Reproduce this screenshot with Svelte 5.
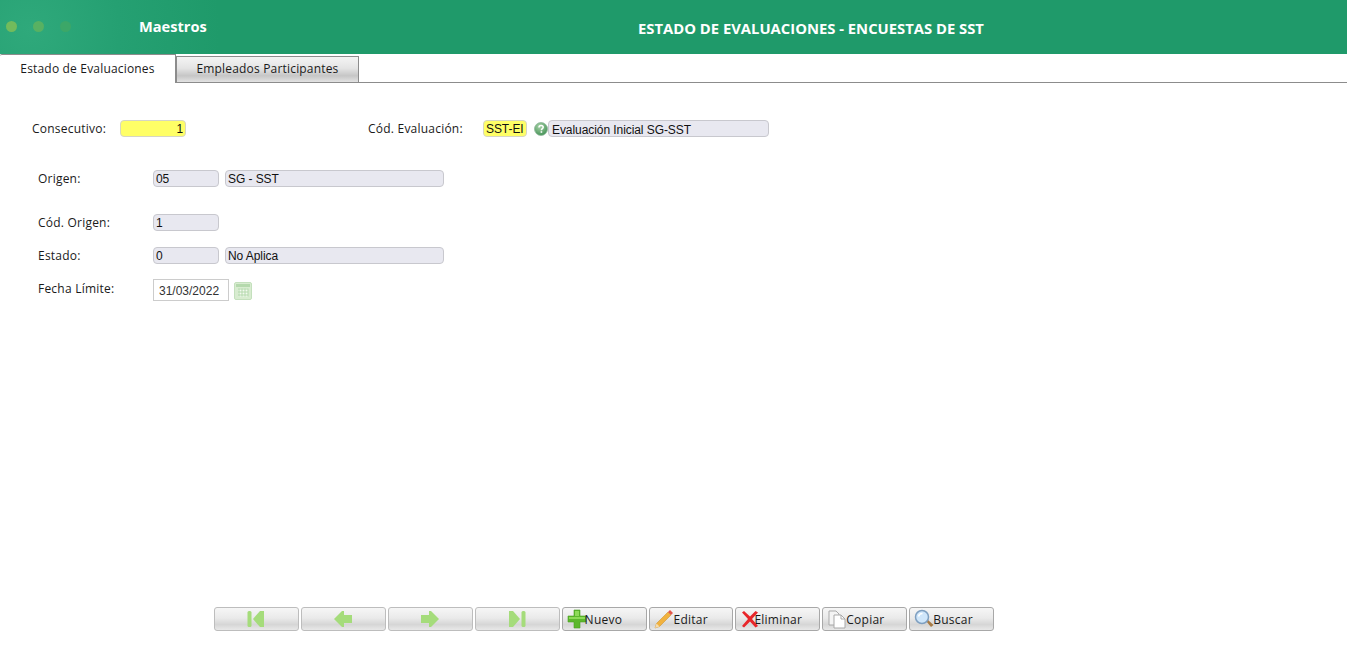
<script>
  const tabs = ["Estado de Evaluaciones", "Empleados Participantes"];
  const navButtons = ["first", "prev", "next", "last"];
  const actions = ["Nuevo", "Editar", "Eliminar", "Copiar", "Buscar"];
  const fields = [
    { label: "Origen:", code: "05", name: "SG - SST", gap: 27 },
    { label: "Cód. Origen:", code: "1", gap: 16 },
    { label: "Estado:", code: "0", name: "No Aplica", gap: 13 }
  ];
</script>

<div class="page">
  <header class="topbar">
    <div class="dots">
      <span class="dot d1"></span>
      <span class="dot d2"></span>
      <span class="dot d3"></span>
    </div>
    <div class="section">Maestros</div>
    <h1>ESTADO DE EVALUACIONES - ENCUESTAS DE SST</h1>
  </header>

  <nav class="tabs">
    {#each tabs as tab, i}
      <div class="tab" class:active={i === 0}>{tab}</div>
    {/each}
  </nav>

  <main class="form">
    <div class="row first">
      <label class="lbl-cons" for="cons">Consecutivo:</label>
      <input id="cons" class="inp req num" value="1" readonly />
      <label class="lbl-eval" for="eval">Cód. Evaluación:</label>
      <input id="eval" class="inp req code" value="SST-EI" readonly />
      <svg class="help" width="14" height="14" viewBox="0 0 14 14">
        <defs>
          <radialGradient id="hg" cx="40%" cy="30%" r="75%">
            <stop offset="0" stop-color="#a9d3a9" />
            <stop offset="1" stop-color="#3f8f52" />
          </radialGradient>
        </defs>
        <circle cx="7" cy="7" r="6.5" fill="url(#hg)" stroke="#8fb89a" stroke-width="0.8" />
        <path d="M5 5.4C5 4 6 3.4 7.1 3.4 8.4 3.4 9.2 4.2 9.2 5.2 9.2 6.6 7.4 6.6 7.4 8.2" fill="none" stroke="#fff" stroke-width="1.5" />
        <rect x="6.6" y="9.2" width="1.6" height="1.6" fill="#fff" />
      </svg>
      <input class="inp ro desc-eval" value="Evaluación Inicial SG-SST" readonly />
    </div>

    {#each fields as f}
      <div class="row field" style="margin-bottom: {f.gap}px">
        <span class="lbl">{f.label}</span>
        <input class="inp ro short" value={f.code} readonly />
        {#if f.name}
          <input class="inp ro desc" value={f.name} readonly />
        {/if}
      </div>
    {/each}

    <div class="row date-row">
      <span class="lbl date-lbl">Fecha Límite:</span>
      <input class="date" value="31/03/2022" readonly />
      <svg class="cal" width="18" height="18" viewBox="0 0 18 18">
        <rect x="0.5" y="0.5" width="17" height="17" rx="1.5" fill="#d8ecd0" stroke="#c4e0bd" />
        <rect x="2" y="2" width="14" height="3" fill="#b5d9ad" />
        <path d="M4 6.500h10v8H4z" fill="#f3faf0" />
        <path d="M4 7h10M4 10h10M4 13h10M5 6.500v8M8 6.500v8M11 6.500v8M14 6.500v8" stroke="#b4d9ac" stroke-width="1" fill="none" />
      </svg>
    </div>
  </main>

  <footer class="toolbar">
    {#each navButtons as b}
      <button class="btn nav" aria-label={b}>
        <svg width="20" height="18" viewBox="0 0 20 18">
          {#if b === "first"}
            <rect x="1.500" y="1" width="4" height="16" rx="1.500" fill="#a5dc7b" />
            <path d="M7 9 14 1h4v16h-4z" fill="#a5dc7b" />
          {:else if b === "prev"}
            <path d="M1 9 9 1h2v4h8v8h-8v4H9z" fill="#a5dc7b" />
          {:else if b === "next"}
            <path d="M19 9 11 1H9v4H1v8h8v4h2z" fill="#a5dc7b" />
          {:else}
            <rect x="14.500" y="1" width="4" height="16" rx="1.500" fill="#a5dc7b" />
            <path d="M13 9 6 1H2v16h4z" fill="#a5dc7b" />
          {/if}
        </svg>
      </button>
    {/each}

    {#each actions as a}
      <button class="btn action">
        <svg class="ico {a.toLowerCase()}" width="20" height="20" viewBox="0 0 20 20">
          {#if a === "Nuevo"}
            <path d="M7 1h6v6h6v6h-6v6H7v-6H1V7h6z" fill="#5cb82c" stroke="#4b9d22" stroke-width="0.6" />
            <path d="M8 2h4v5H8zM2 8h16v2H2z" fill="#8ddb58" />
          {:else if a === "Editar"}
            <path d="M1 19l1.500-4.500L14 3l3 3L5.500 17.500z" fill="#f1b23f" stroke="#c98a22" stroke-width="0.5" />
            <path d="M1 19l1.500-4.500 3 3z" fill="#f5dcae" />
            <path d="M14 3l2-2 3 3-2 2z" fill="#e2574c" />
          {:else if a === "Eliminar"}
            <path d="M2 3.500 4 2l6 5.500L15.500 2 18 3.500 12 10l6 7-2.500 1.500L10 12.500 4 18.500 2 17l6-7z" fill="#e8262a" />
          {:else if a === "Copiar"}
            <path d="M2 2h7l3 3v11H2z" fill="#f4f4f4" stroke="#a9a9a9" />
            <path d="M7 6h7l4 4v9H7z" fill="#fff" stroke="#a9a9a9" />
            <path d="M14 6v4h4" fill="none" stroke="#a9a9a9" />
          {:else}
            <path d="M12 12l5 6 2.500-2-6-5.500z" fill="#a87b45" />
            <circle cx="8" cy="8" r="6.500" fill="#cfe6fa" stroke="#7e9fc0" stroke-width="1.500" />
            <path d="M4.500 7.500C5 5.500 6.500 4.500 8.500 4.500" stroke="#fff" stroke-width="1.500" fill="none" />
          {/if}
        </svg>
        <span>{a}</span>
      </button>
    {/each}
  </footer>
</div>

<style>
  :global(body) {
    margin: 0;
    background: #fff;
    overflow: hidden;
  }

  .page {
    height: 653px;
    display: flex;
    flex-direction: column;
    font-family: "Open Sans", "Noto Sans", sans-serif;
    font-size: 12px;
    letter-spacing: 0.22px;
    color: #1a1a1a;
  }

  .topbar {
    height: 54px;
    flex: none;
    display: flex;
    align-items: center;
    color: #fff;
    background: radial-gradient(circle at 30px 30px, #2fa97b 0, #25a072 90px, #1f9a6a 190px);
  }

  .dots {
    width: 139px;
    flex: none;
    display: flex;
    gap: 16px;
    padding-left: 6px;
    box-sizing: border-box;
    margin-top: -1px;
  }

  .dot {
    width: 11px;
    height: 11px;
    border-radius: 50%;
  }

  .d1 { background: #72bb5c; }
  .d2 { background: #58b162; }
  .d3 { background: #3ca768; }

  .section {
    width: 276px;
    font-size: 14.6px;
    letter-spacing: 0;
    font-weight: 700;
    margin-top: -3px;
  }

  h1 {
    margin: 2px 0 0 0;
    width: 792px;
    text-align: center;
    font-size: 14.8px;
    letter-spacing: 0;
    font-weight: 700;
  }

  .tabs {
    height: 29px;
    flex: none;
    display: flex;
    align-items: flex-end;
    box-sizing: border-box;
    border-bottom: 1px solid #8c8c8c;
  }

  .tab {
    box-sizing: border-box;
    text-align: center;
    font-size: 12px;
    letter-spacing: 0.18px;
  }

  .tab.active {
    width: 176px;
    height: 29px;
    margin-bottom: -1px;
    line-height: 28px;
    background: #fff;
    border-top: 1px solid #8c8c8c;
    border-right: 1px solid #8c8c8c;
    border-radius: 2px 0 0 0;
  }

  .tab:not(.active) {
    width: 183px;
    height: 26px;
    line-height: 24px;
    border: 1px solid #8c8c8c;
    border-bottom: 0;
    background: linear-gradient(#f4f4f4, #e4e4e4 45%, #c6c6c6 75%, #e2e2e2);
  }

  .form {
    flex: 1;
    padding-top: 37px;
  }

  .row {
    display: flex;
    align-items: center;
  }

  .first {
    height: 17px;
    margin-bottom: 33px;
    padding-left: 32px;
  }

  .lbl-cons { width: 88px; }
  .lbl-eval { margin-left: 182px; width: 115px; }

  .field {
    height: 17px;
    padding-left: 38px;
  }

  .lbl { width: 115px; flex: none; }

  .inp {
    box-sizing: border-box;
    height: 17px;
    padding: 1px 2px 0;
    border: 1px solid #c8c8ce;
    border-radius: 4px;
    font-family: "Liberation Sans", Arial, sans-serif;
    font-size: 12px;
    letter-spacing: -0.07px;
    color: #111;
    outline: none;
  }

  .req { background: #ffff66; border-color: #d6d6c4; }
  .ro { background: #e8e8f0; }
  .num { width: 66px; text-align: right; }
  .code { width: 44px; }
  .help { margin-left: 7px; flex: none; }
  .desc-eval { width: 221px; padding: 2px 3px 0; }
  .short { width: 66px; }
  .desc { width: 219px; margin-left: 6px; }

  .date-row {
    padding-left: 38px;
    align-items: flex-start;
  }

  .date-lbl { margin-top: 3px; line-height: 17px; }

  .date {
    box-sizing: border-box;
    width: 76px;
    height: 22px;
    margin-top: 2px;
    padding: 2px 5px 0;
    border: 1px solid #cccccc;
    font-family: "Liberation Sans", Arial, sans-serif;
    font-size: 12px;
    letter-spacing: 0;
    color: #333;
    outline: none;
  }

  .cal { margin: 5px 0 0 5px; flex: none; }

  .toolbar {
    flex: none;
    display: flex;
    gap: 2px;
    padding: 0 0 22px 214.05px;
  }

  .btn {
    box-sizing: border-box;
    width: 84.9px;
    height: 24px;
    padding: 0 0 0 4px;
    display: flex;
    align-items: center;
    border: 1px solid #bdbdbd;
    border-radius: 3px;
    background: linear-gradient(#f6f6f6, #eaeaea 45%, #d6d6d6 75%, #e8e8e8);
    font-family: "Open Sans", "Noto Sans", sans-serif;
    font-size: 12px;
    letter-spacing: 0.25px;
    color: #1a1a1a;
  }

  .nav {
    justify-content: center;
    padding: 0;
  }

  .action { border-color: #a8a8a8; }
  .ico { flex: none; }
  .ico.nuevo { margin-right: -2px; }
  .ico.eliminar { margin-right: -6px; }
  .ico.copiar, .ico.buscar { margin-right: -1px; }
</style>
